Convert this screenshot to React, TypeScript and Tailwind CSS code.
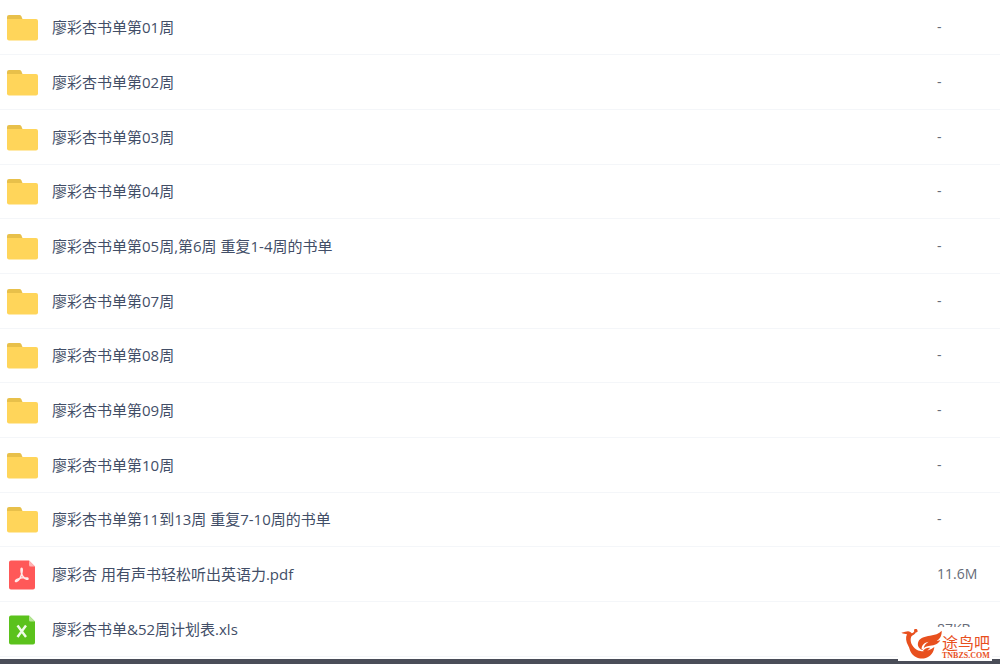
type FileKind = 'folder' | 'pdf' | 'xls';

interface FileItem {
  name: string;
  size: string;
  kind: FileKind;
}

const files: FileItem[] = [
  { name: '廖彩杏书单第01周', size: '-', kind: 'folder' },
  { name: '廖彩杏书单第02周', size: '-', kind: 'folder' },
  { name: '廖彩杏书单第03周', size: '-', kind: 'folder' },
  { name: '廖彩杏书单第04周', size: '-', kind: 'folder' },
  { name: '廖彩杏书单第05周,第6周 重复1-4周的书单', size: '-', kind: 'folder' },
  { name: '廖彩杏书单第07周', size: '-', kind: 'folder' },
  { name: '廖彩杏书单第08周', size: '-', kind: 'folder' },
  { name: '廖彩杏书单第09周', size: '-', kind: 'folder' },
  { name: '廖彩杏书单第10周', size: '-', kind: 'folder' },
  { name: '廖彩杏书单第11到13周 重复7-10周的书单', size: '-', kind: 'folder' },
  { name: '廖彩杏 用有声书轻松听出英语力.pdf', size: '11.6M', kind: 'pdf' },
  { name: '廖彩杏书单&52周计划表.xls', size: '87KB', kind: 'xls' },
];

function FolderIcon() {
  return (
    <svg viewBox="0 0 32 26" className="h-[26px] w-8" aria-hidden="true">
      <path d="M0 2a2 2 0 0 1 2-2h10.500a2 2 0 0 1 1.800 1.200L15.500 4v4H0z" fill="#e8c04a" />
      <path d="M0 4h29A2 2 0 0 1 31 6v17.500a2 2 0 0 1-2 2H2a2 2 0 0 1-2-2z" fill="#ffd55a" />
    </svg>
  );
}

function PdfIcon() {
  return (
    <svg viewBox="0 0 26 30" className="ml-0.5 h-[30px] w-[26px]" aria-hidden="true">
      <path d="M2 0.500H20L26 6.500V27.500a2 2 0 0 1-2 2H2a2 2 0 0 1-2-2v-25a2 2 0 0 1 2-2z" fill="#ff5858" />
      <path d="M20 0.500l6 6h-4.500A1.500 1.500 0 0 1 20 5z" fill="#ffb3b3" />
      <path
        d="M12.500 8.200c1.200 0 .7 3.300.3 5.300-.8 3.300-3 6.800-5.400 8-1.300.5-1.300-.9.200-1.800 2.700-1.700 7.700-2.600 10.600-1.700 1.500.6.700 1.600-.6 1.200-2.700-.8-4.600-3.700-5.300-6.700-.3-1.700-.5-4.300.2-4.300z"
        fill="none"
        stroke="#ffe9e9"
        strokeWidth="1.500"
        strokeLinejoin="round"
      />
    </svg>
  );
}

function XlsIcon() {
  return (
    <svg viewBox="0 0 26 30" className="ml-0.5 h-[30px] w-[26px]" aria-hidden="true">
      <path d="M2 0.500H20L26 6.500V27.500a2 2 0 0 1-2 2H2a2 2 0 0 1-2-2v-25a2 2 0 0 1 2-2z" fill="#5bc21c" />
      <path d="M20 0.500l6 6h-4.500A1.500 1.500 0 0 1 20 5z" fill="#b5e596" />
      <path d="M8.500 10.500l8.500 11.500M17 10.500l-8.500 11.500" fill="none" stroke="#effbe8" strokeWidth="2.400" />
    </svg>
  );
}

function FileIcon({ kind }: { kind: FileKind }) {
  if (kind === 'pdf') return <PdfIcon />;
  if (kind === 'xls') return <XlsIcon />;
  return <FolderIcon />;
}

function SiteMark() {
  return (
    <div className="absolute right-2 bottom-1 flex h-[34px] w-[94px] items-end bg-white">
      <svg viewBox="9 33 132 102" className="h-[34px] w-11 shrink-0" aria-hidden="true">
        <g fill="#e8501e">
          {/* 头、颈和身体外弧 */}
          <path d="M19 50C28 49 33 46 39 46C44 46 48 49 50 52C54 51 57 48 58 45C55 42 58 38 62 39C64 38 68 40 67 43C70 46 67 50 63 49C60 54 55 58 50 60C45 68 46 82 55 92C60 98 67 103 76 105C87 108 103 104 118 93C117 107 108 122 90 127C72 130 57 123 49 111C43 103 45 98 39 88C33 77 31 65 36 55C32 52 25 54 19 50Z" />
          {/* 翅膀 */}
          <path d="M140 44C141 58 135 69 125 74C130 75 133 74 136 72C130 84 119 88 105 89C94 90 86 94 82 102C70 97 66 87 70 77C75 65 90 61 105 59C119 57 132 53 140 44Z" />
          <path d="M84 104C90 97 98 94 106 96C101 99 97 104 94 111Z" />
        </g>
        <path d="M80 100C79 88 87 80 101 77C92 82 86 89 86 99Z" fill="#fff" />
      </svg>
      <div className="flex flex-col text-[#e8501e]">
        <span className="text-[16px] leading-[18px]">途鸟吧</span>
        <span className="pb-px font-['Liberation_Serif',serif] text-[8px] leading-[8px] font-bold">TNBZS.COM</span>
      </div>
    </div>
  );
}

export default function App() {
  return (
    <div className="relative bg-white font-['Open_Sans','Noto_Sans_CJK_SC',sans-serif]">
      <table className="w-full table-fixed border-collapse text-[15px] leading-5 text-[#424e67]">
        <tbody>
          {files.map((file) => (
            <tr key={file.name} className="h-[55px] border-b border-[#f4f6f9] nth-[3n+1]:h-[54px]">
              <td className="w-[52px] pt-0.5 pl-[7px]">
                <FileIcon kind={file.kind} />
              </td>
              <td>{file.name}</td>
              <td className="w-[63px] text-sm text-[#666b78]">{file.size}</td>
            </tr>
          ))}
        </tbody>
      </table>
      {/* 底部状态条 */}
      <div className="mt-0.5 h-1.5 bg-[#4a4d58]" />
      <SiteMark />
    </div>
  );
}
